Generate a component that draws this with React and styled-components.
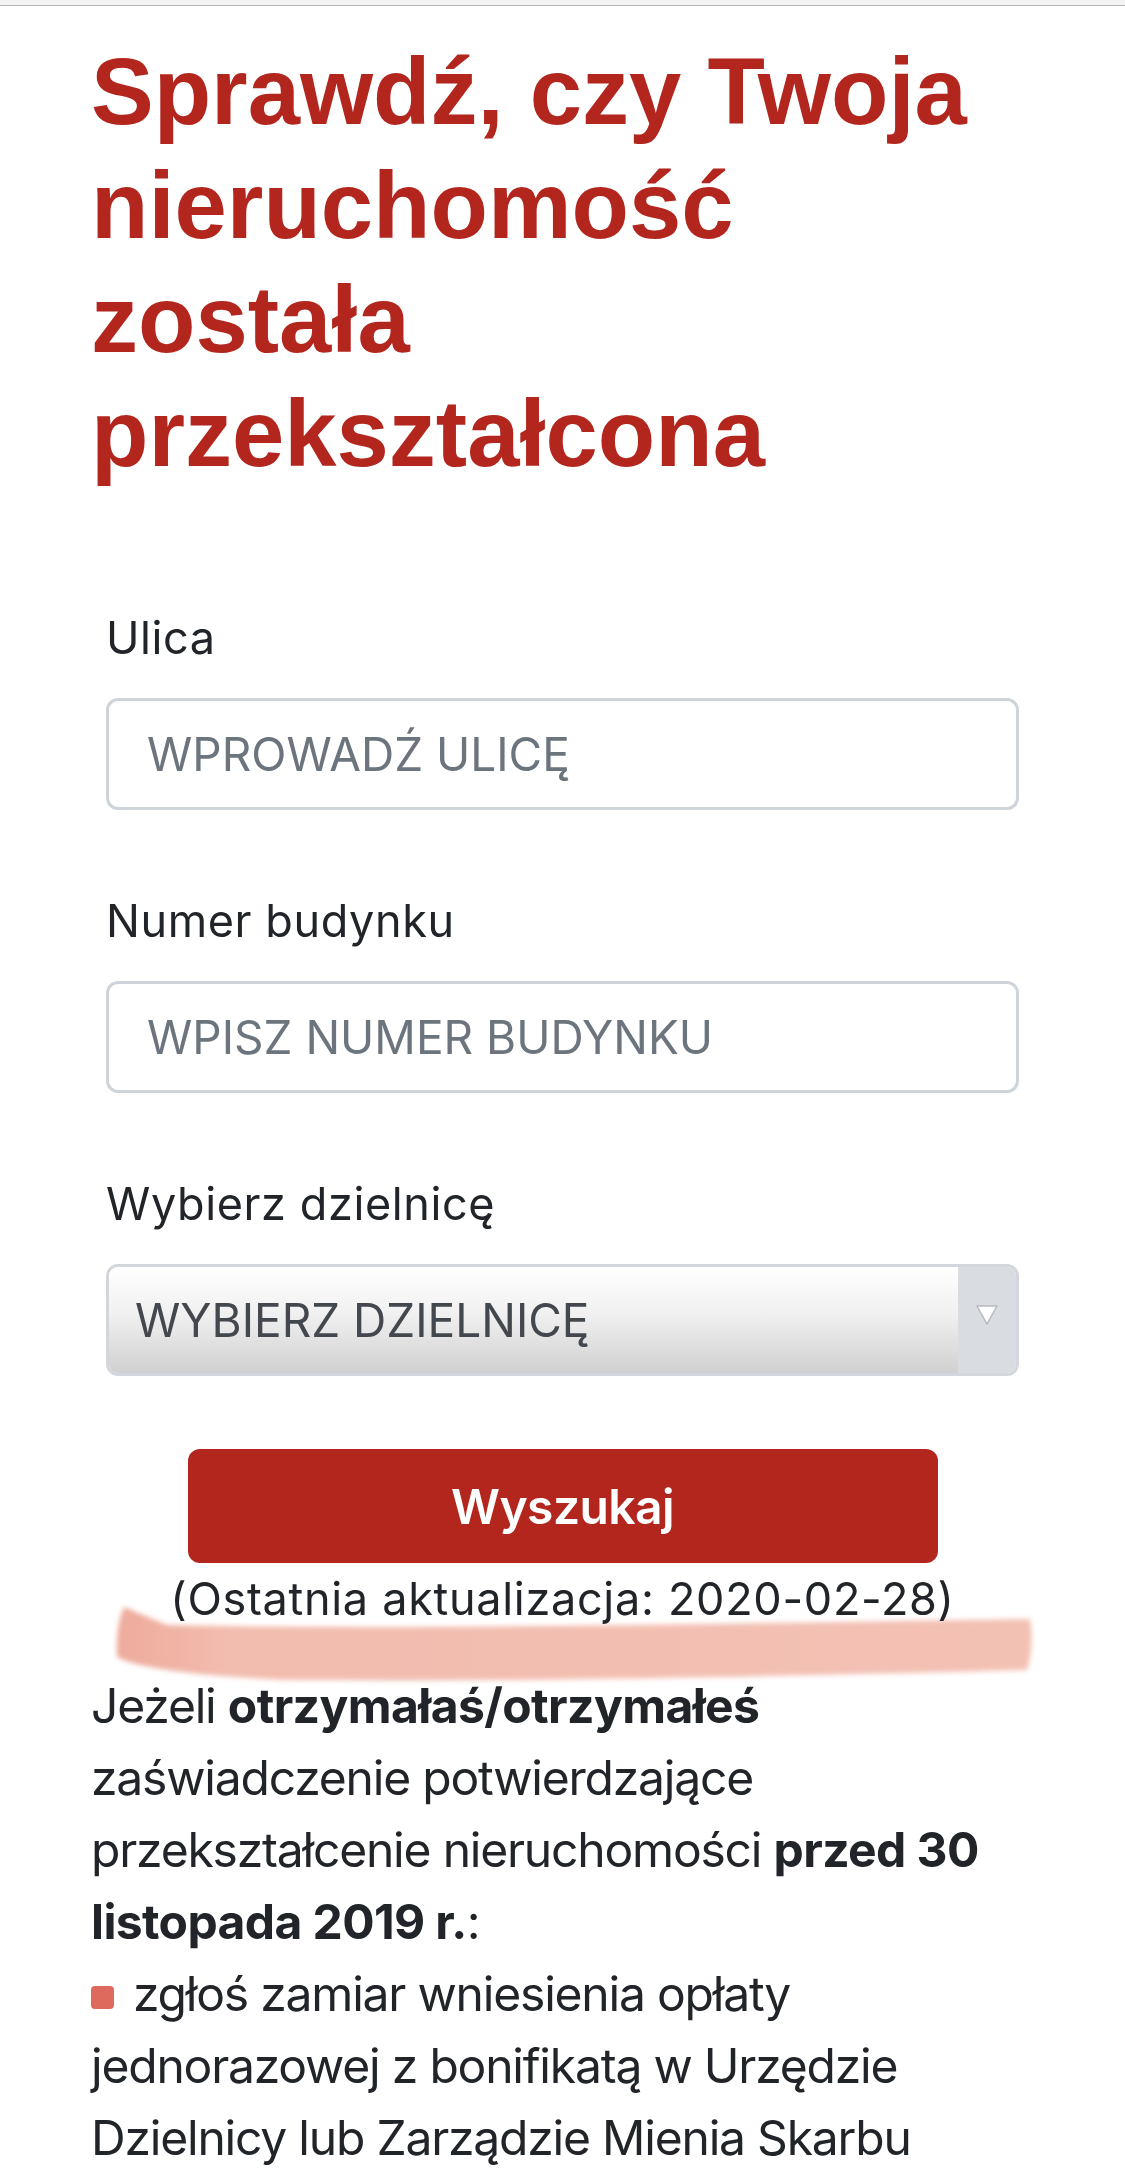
import React from "react";
import styled, { createGlobalStyle } from "styled-components";

const GlobalStyle = createGlobalStyle`
  html, body { margin: 0; padding: 0; background: #ffffff; }
  body {
    font-family: Inter, "Noto Sans", sans-serif;
    color: #212529;
    -webkit-font-smoothing: antialiased;
  }
  * { box-sizing: border-box; }
`;

const Page = styled.div`
  position: relative;
  width: 1125px;
  min-height: 2168px;
  overflow: hidden;
`;

const TopBar = styled.div`
  height: 6px;
  background: #f3f3f3;
  border-bottom: 1px solid #b4b4b4;
`;

const Content = styled.main`
  padding: 0 91px;
`;

const Heading = styled.h1`
  margin: 29px 0 0;
  font-family: "Liberation Sans", Arial, sans-serif;
  font-weight: 700;
  font-size: 94px;
  line-height: 114px;
  color: #b3261e;
`;

const Form = styled.form`
  margin-top: 114px;
  padding: 0 15px;
`;

const Group = styled.div`
  margin-bottom: 78px;
  &:last-of-type { margin-bottom: 0; }
`;

const Label = styled.label`
  display: block;
  margin: 0 0 27px;
  font-size: 45px;
  line-height: 66px;
  letter-spacing: 0.6px;
  color: #212529;
`;

const Input = styled.input`
  display: block;
  width: 100%;
  height: 112px;
  margin: 0;
  padding: 0 38px;
  border: 3px solid #ced4da;
  border-radius: 12px;
  background: #ffffff;
  font-family: Inter, "Noto Sans", sans-serif;
  font-size: 46px;
  color: #495057;
  outline: none;
  &::placeholder { color: #6c757d; opacity: 1; }
`;

const SelectBox = styled.div`
  display: flex;
  height: 112px;
  border: 3px solid #d3d6dc;
  border-radius: 12px;
  overflow: hidden;
`;

const SelectField = styled.select`
  flex: 1;
  min-width: 0;
  height: 100%;
  margin: 0;
  padding: 0 0 0 26px;
  border: none;
  appearance: none;
  -webkit-appearance: none;
  background: linear-gradient(to bottom, #ffffff 0%, #f0f0f0 45%, #d0d0d0 100%);
  font-family: Inter, "Noto Sans", sans-serif;
  font-size: 46px;
  color: #43484e;
  outline: none;
`;

const ArrowBox = styled.div`
  width: 58px;
  display: flex;
  align-items: center;
  justify-content: center;
  padding-bottom: 10px;
  background: #d9dce1;
`;

const Button = styled.button`
  display: block;
  width: 750px;
  height: 114px;
  margin: 73px auto 0;
  border: none;
  border-radius: 12px;
  background: #b3261e;
  color: #ffffff;
  font-family: Inter, "Noto Sans", sans-serif;
  font-weight: 600;
  font-size: 48px;
  letter-spacing: -0.6px;
`;

const UpdateNote = styled.p`
  margin: 3px 0 0;
  text-align: center;
  font-size: 45px;
  line-height: 66px;
  letter-spacing: 0.7px;
  color: #212529;
`;

const Body = styled.div`
  margin-top: 38px;
  font-size: 48px;
  line-height: 72px;
  letter-spacing: -1.2px;
  color: #212529;
`;

const Paragraph = styled.p`
  margin: 0;
`;

const Strong = styled.strong`
  font-weight: 700;
  letter-spacing: -0.6px;
`;

const List = styled.ul`
  margin: 0;
  padding: 0;
  list-style: none;
`;

const Item = styled.li`
  &::before {
    content: "";
    display: inline-block;
    width: 23px;
    height: 23px;
    margin-right: 19px;
    border-radius: 4px;
    background: #de6a5e;
    vertical-align: 2px;
  }
`;

const Marker = styled.svg`
  position: absolute;
  left: 100px;
  top: 1590px;
  pointer-events: none;
  mix-blend-mode: multiply;
`;

export default function App() {
  return (
    <Page>
      <GlobalStyle />
      <TopBar />
      <Content>
        <Heading>Sprawdź, czy Twoja nieruchomość została przekształcona</Heading>
        <Form onSubmit={(e) => e.preventDefault()}>
          <Group>
            <Label htmlFor="ulica">Ulica</Label>
            <Input id="ulica" type="text" placeholder="WPROWADŹ ULICĘ" />
          </Group>
          <Group>
            <Label htmlFor="numer">Numer budynku</Label>
            <Input id="numer" type="text" placeholder="WPISZ NUMER BUDYNKU" />
          </Group>
          <Group>
            <Label htmlFor="dzielnica">Wybierz dzielnicę</Label>
            <SelectBox>
              <SelectField id="dzielnica" defaultValue="">
                <option value="">WYBIERZ DZIELNICĘ</option>
              </SelectField>
              <ArrowBox>
                <svg width="24" height="22" viewBox="0 0 24 22">
                  <path d="M2 2 L22 2 L12 20 Z" fill="#ffffff" stroke="#b5b8bd" strokeWidth="1.5" strokeLinejoin="round" />
                </svg>
              </ArrowBox>
            </SelectBox>
          </Group>
          <Button type="submit">Wyszukaj</Button>
          <UpdateNote>(Ostatnia aktualizacja: 2020-02-28)</UpdateNote>
        </Form>
        <Body>
          <Paragraph>
            Jeżeli <Strong>otrzymałaś/otrzymałeś</Strong> zaświadczenie potwierdzające
            przekształcenie nieruchomości <Strong>przed 30 listopada 2019 r.</Strong>:
          </Paragraph>
          <List>
            <Item>
              zgłoś zamiar wniesienia opłaty jednorazowej z bonifikatą w Urzędzie Dzielnicy lub
              Zarządzie Mienia Skarbu Państwa
            </Item>
          </List>
        </Body>
      </Content>
      <Marker width="950" height="110" viewBox="0 0 950 110">
        <defs>
          <linearGradient id="mk" x1="0" x2="1" y1="0" y2="0">
            <stop offset="0" stopColor="#eeab9c" />
            <stop offset="0.12" stopColor="#f2bcae" />
            <stop offset="1" stopColor="#f3c1b4" />
          </linearGradient>
          <filter id="soft" x="-5%" y="-30%" width="110%" height="160%">
            <feGaussianBlur stdDeviation="2.5" />
          </filter>
        </defs>
        <path
          d="M24 17 L67 35 C300 40 600 34 930 29 C933 45 932 65 927 80 C700 86 400 92 200 90 C120 88 40 80 17 67 C16 50 18 30 24 17 Z"
          fill="url(#mk)"
          filter="url(#soft)"
        />
      </Marker>
    </Page>
  );
}
